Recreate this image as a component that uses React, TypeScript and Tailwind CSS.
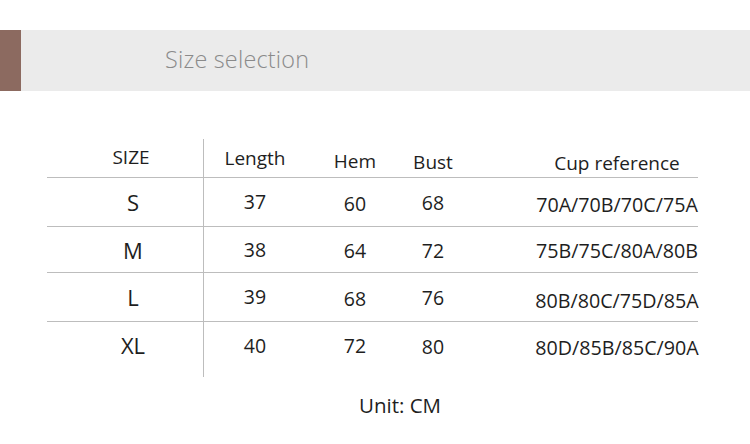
import React from "react";

const rows = [
  { size: "S", len: "37", hem: "60", bust: "68", cup: "70A/70B/70C/75A", h: "h-[49px]", cupPt: "pt-[6px]" },
  { size: "M", len: "38", hem: "64", bust: "72", cup: "75B/75C/80A/80B", h: "h-[46px]", cupPt: "pt-[2px]" },
  { size: "L", len: "39", hem: "68", bust: "76", cup: "80B/80C/75D/85A", h: "h-[49px]", cupPt: "pt-[8px]" },
  { size: "XL", len: "40", hem: "72", bust: "80", cup: "80D/85B/85C/90A", h: "h-[56px]", cupPt: "pt-[0px]" },
];

export default function App() {
  return (
    <div
      className="w-[750px] h-[444px] bg-white overflow-hidden text-[#1e1e1e]"
      style={{ fontFamily: '"Open Sans", "Noto Sans", sans-serif' }}
    >
      <div className="pt-[30px]">
        <div className="flex h-[61px]">
          <div className="w-[21px] bg-[#8c6a60]" />
          <div className="flex-1 bg-[#ebebeb] flex items-center pl-[144px]">
            <span className="text-[23.4px] font-light text-[#8a8a8a] tracking-[0.2px] leading-none pb-[1px]">
              Size selection
            </span>
          </div>
        </div>
      </div>

      <div className="mt-[48px] ml-[47px] w-[651px]">
        <div className="flex h-[38px] text-[19px] leading-[24px]">
          <div className="w-[156px] pl-[12px] text-center pt-[6px]">SIZE</div>
          <div className="w-[103px] border-l border-[#bdbdbd] text-center pt-[7px]">Length</div>
          <div className="w-[98px] text-center pt-[10px]">Hem</div>
          <div className="w-[58px] text-center pt-[11px]">Bust</div>
          <div className="w-[236px] pl-[74px] text-center pt-[12px] whitespace-nowrap">Cup reference</div>
        </div>
        {rows.map((r, i) => (
          <div key={i} className={`flex ${r.h} border-t border-[#bdbdbd] leading-[24px]`}>
            <div className={`w-[156px] pl-[16px] flex justify-center text-[22px] ${i === 3 ? "items-start pt-[11px]" : "items-center"}`}>
              {r.size}
            </div>
            <div className={`w-[103px] border-l border-[#bdbdbd] flex justify-center text-[19.5px] ${i === 3 ? "items-start pt-[12px]" : "items-center"}`}>
              {r.len}
            </div>
            <div className={`w-[98px] flex justify-center text-[19.5px] ${i === 3 ? "items-start pt-[12px]" : "items-center pt-[3px]"}`}>
              {r.hem}
            </div>
            <div className={`w-[58px] flex justify-center text-[19.5px] ${i === 3 ? "items-start pt-[13px]" : "items-center pt-[2px]"}`}>
              {r.bust}
            </div>
            <div className={`w-[236px] pl-[74px] flex justify-center whitespace-nowrap text-[19.7px] ${i === 3 ? "items-start pt-[14px]" : `items-center ${r.cupPt}`}`}>
              {r.cup}
            </div>
          </div>
        ))}
      </div>

      <div className="mt-[16px] pl-[359px] text-[20.5px] leading-[24px]">Unit: CM</div>
    </div>
  );
}
